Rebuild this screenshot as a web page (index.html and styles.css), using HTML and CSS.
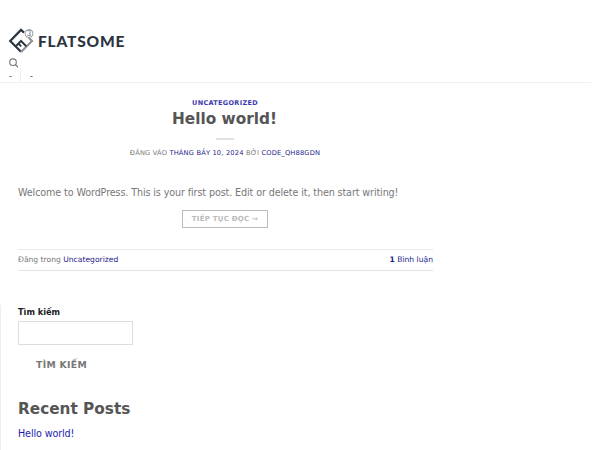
FILE: index.html
```html
<!DOCTYPE html>
<html lang="vi">
<head>
  <meta charset="UTF-8">
  <meta name="viewport" content="width=device-width,initial-scale=1">
  <title>Hello world!</title>
  <link rel="stylesheet" href="styles.css">
</head>
<body>
  <header class="header">
    <a class="logo">
      <svg class="logo-mark" viewBox="0 0 26 26" width="26" height="26">
        <path d="M16 4.6 L13 1.9 L2.2 13 L13 23.8" fill="none" stroke="#2c3540" stroke-width="2.2"/>
        <path d="M20.8 9.8 L24 13 L13 24" fill="none" stroke="#929699" stroke-width="2.2"/>
        <path d="M7.6 18.4 L13 13 L18.4 18.4" fill="none" stroke="#2c3540" stroke-width="2"/>
        <path d="M10.4 15.6 L13.2 18.4" fill="none" stroke="#2c3540" stroke-width="2"/>
        <circle cx="21" cy="5.5" r="4" fill="#fff" stroke="#777d83" stroke-width=".8"/>
        <text class="logo-badge" x="21" y="8" text-anchor="middle">3</text>
      </svg>
      <span class="logo-text">FLATSOME</span>
    </a>
    <svg class="search-icon" viewBox="0 0 10 10" width="10" height="10">
      <circle cx="4" cy="4.2" r="3.3" fill="none" stroke="#777" stroke-width="1.1"/>
      <path d="M6.4 6.6 L9 9.4" stroke="#777" stroke-width="1.2"/>
    </svg>
    <div class="header-nav">
      <span class="nav-item">-</span>
      <span class="nav-item">-</span>
    </div>
  </header>

  <article class="post">
    <div class="category">UNCATEGORIZED</div>
    <h2 class="post-title">Hello world!</h2>
    <div class="divider"></div>
    <div class="post-meta">ĐĂNG VÀO <a>THÁNG BẢY 10, 2024</a> BỞI <a>CODE_QH88GDN</a></div>
    <p class="excerpt">Welcome to WordPress. This is your first post. Edit or delete it, then start writing!</p>
    <a class="more-link">TIẾP TỤC ĐỌC →</a>
    <footer class="post-footer">
      <span>Đăng trong <a>Uncategorized</a></span>
      <a><b>1</b> Bình luận</a>
    </footer>
  </article>

  <aside class="sidebar">
    <label class="search-label" for="search">Tìm kiếm</label>
    <input class="search-field" type="text" id="search">
    <button class="search-button">TÌM KIẾM</button>
    <h2 class="widget-title">Recent Posts</h2>
    <a class="recent-link">Hello world!</a>
  </aside>
</body>
</html>
```
FILE: styles.css
```css
* {
  box-sizing: border-box;
}

body {
  margin: 0;
  height: 450px;
  overflow: hidden;
  background: #fff;
  color: #777;
  font-family: "DejaVu Sans", sans-serif;
  font-size: 9.6px;
  letter-spacing: -0.11px;
}

a {
  color: #1c1c8c;
}

/*header*/

.header {
  width: 591px;
  height: 83px;
  padding: 28px 0 0 8px;
  border-bottom: 1px solid #f0f0f0;
}

.logo {
  display: flex;
  align-items: center;
  height: 26px;
}

.logo-text {
  margin-left: 4px;
  color: #2c3540;
  font: 900 15.5px/26px Lato, sans-serif;
  letter-spacing: 0.8px;
}

.logo-badge {
  fill: #666c73;
  font: 7px Lato, sans-serif;
}

.search-icon {
  display: block;
  margin: 4px 0 0 1px;
}

.header-nav {
  display: flex;
  height: 14px;
  padding-left: 1px;
  color: #333;
  font-size: 8px;
  line-height: 18px;
}

.nav-item:first-child {
  width: 12px;
  margin-right: 9px;
  border-right: 1px solid #eee;
}

/*post*/

.post {
  width: 415px;
  margin-left: 18px;
  padding-top: 15px;
  text-align: center;
}

.category {
  padding-right: 1px;
  color: #3a3ab0;
  font-size: 6.5px;
  font-weight: bold;
  line-height: 10px;
  letter-spacing: 0.32px;
}

.post-title {
  margin: 0;
  padding-right: 2px;
  color: #555;
  font-size: 15.3px;
  line-height: 22px;
  letter-spacing: 0;
}

.divider {
  width: 18px;
  height: 2px;
  margin: 8px 199px 0 198px;
  background: #e2e2e2;
}

.post-meta {
  padding-right: 1px;
  margin-top: 8px;
  font-size: 6.7px;
  line-height: 10px;
  letter-spacing: 0.17px;
}

.excerpt {
  margin: 27px 0 0;
  line-height: 15px;
  text-align: left;
}

.more-link {
  display: block;
  width: 86px;
  height: 18px;
  margin: 10px auto 0 164px;
  border: 1.5px solid #bbb;
  color: #bbb;
  font-size: 7px;
  font-weight: bold;
  line-height: 16px;
  letter-spacing: 0.24px;
}

.post-footer {
  display: flex;
  justify-content: space-between;
  height: 22px;
  margin-top: 21px;
  border-top: 1px solid #eaeaea;
  border-bottom: 1px solid #e4e4e4;
  font-size: 7.6px;
  line-height: 19px;
  letter-spacing: 0;
}

/*sidebar*/

.sidebar {
  display: flex;
  flex-direction: column;
  align-items: flex-start;
  height: 145px;
  margin-top: 34px;
  padding-left: 17px;
  border-left: 1px solid #eee;
}

.search-label {
  color: #222;
  font-size: 8.2px;
  font-weight: bold;
  line-height: 15px;
  letter-spacing: 0;
}

.search-field {
  width: 115px;
  height: 24px;
  margin: 1px 0 0;
  border: 1px solid #ddd;
  background: #fff;
}

.search-button {
  height: 20px;
  margin: 10px 0 0;
  padding: 0 18px;
  border: none;
  background: none;
  color: #777;
  font: bold 9.3px/20px "DejaVu Sans", sans-serif;
  letter-spacing: 0.3px;
}

.widget-title {
  margin: 23px 0 0;
  color: #555;
  font-size: 15.3px;
  line-height: 22px;
  letter-spacing: 0;
}

.recent-link {
  margin-top: 6px;
  color: #1c1cb0;
  line-height: 15px;
}
```
